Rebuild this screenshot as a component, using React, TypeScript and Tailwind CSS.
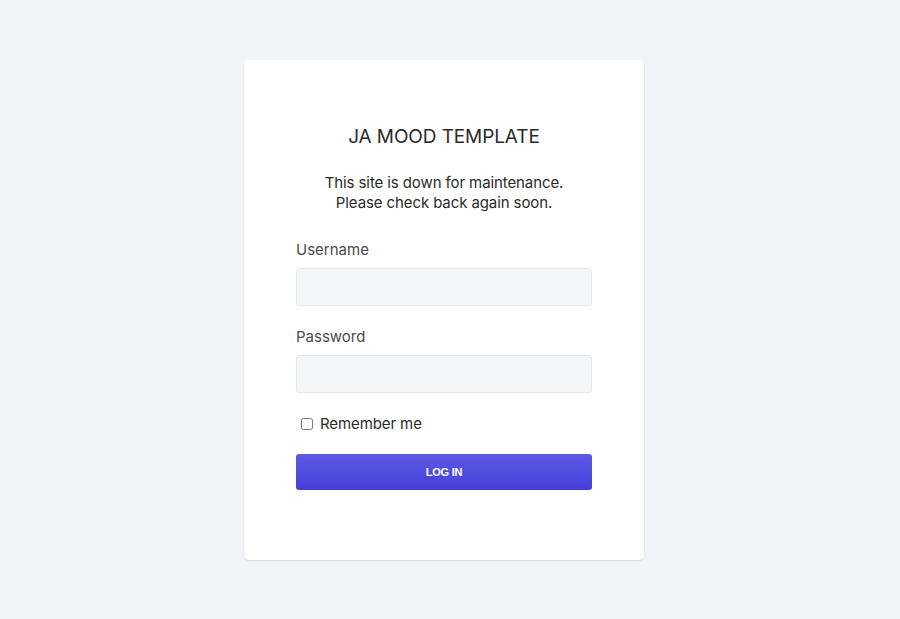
export default function App() {
  return (
    <div
      className="min-h-[619px] w-full bg-[#f2f4f7] pt-[60px] flex justify-center pr-[12px]"
      style={{ fontFamily: 'Inter, "Noto Sans", sans-serif' }}>
      <div className="w-[400px] h-[500px] bg-white rounded-[5px] shadow-[0_1px_2px_rgba(0,0,0,0.12)] px-[52px] pt-[63px]">
        <h1 className="text-center text-[19px] leading-[28px] text-[#2b2b2b] tracking-[-0.1px]">JA MOOD TEMPLATE</h1>

        <p className="mt-[22px] text-center text-[15px] leading-[20px] text-[#2b2b2b] tracking-[-0.1px]">
          This site is down for maintenance.
          <br />
          Please check back again soon.
        </p>

        <div className="mt-[26px]">
          <label className="block text-[15px] leading-[22px] text-[#4a4a4a]">Username</label>
          <input
            type="text"
            className="mt-[7px] block w-full h-[38px] rounded-[3px] border border-[#e6e9ec] bg-[#f3f5f7] px-3 outline-none"
          />
        </div>

        <div className="mt-[20px]">
          <label className="block text-[15px] leading-[22px] text-[#4a4a4a]">Password</label>
          <input
            type="password"
            className="mt-[7px] block w-full h-[38px] rounded-[3px] border border-[#e6e9ec] bg-[#f3f5f7] px-3 outline-none"
          />
        </div>

        <div className="mt-[20px] flex items-center gap-[7px] pl-[5px]">
          <input type="checkbox" className="w-[12px] h-[12px] m-0" />
          <span className="text-[15px] leading-[22px] text-[#2b2b2b] tracking-[-0.1px]">Remember me</span>
        </div>

        <button
          type="button"
          className="mt-[19px] w-full h-[36px] rounded-[3px] bg-gradient-to-b from-[#5d5ae3] to-[#473dd8] text-white text-[11px] font-bold tracking-[-0.2px]"
          style={{ fontFamily: '"Liberation Sans", Arial, sans-serif' }}>
          LOG IN
        </button>
      </div>
    </div>
  );
}
